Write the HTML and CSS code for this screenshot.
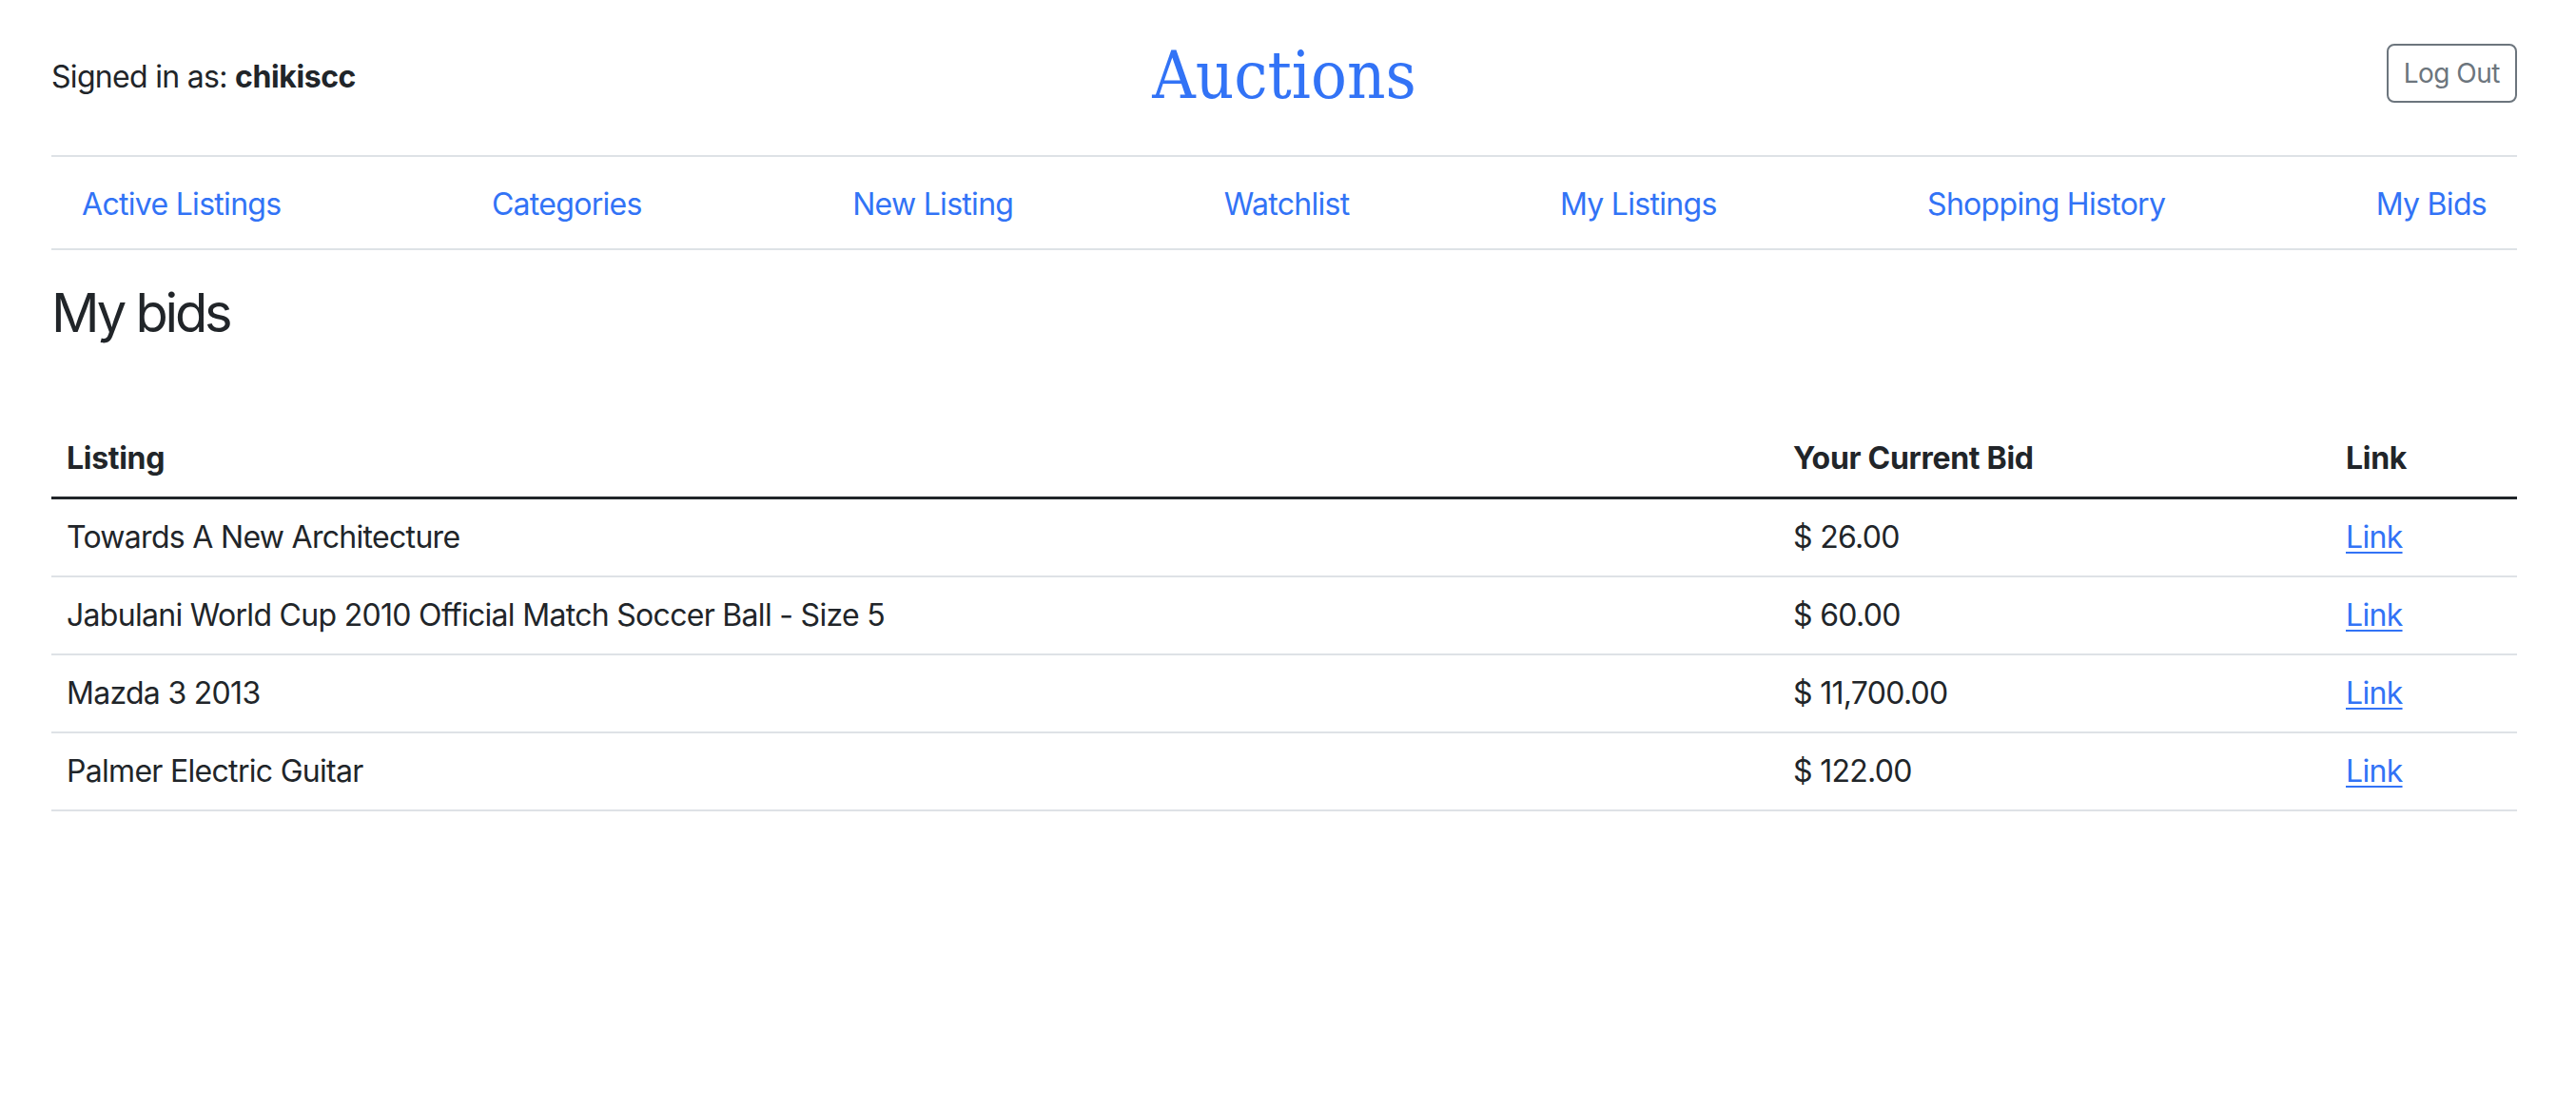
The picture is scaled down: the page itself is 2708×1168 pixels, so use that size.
FILE: index.html
```html
<!DOCTYPE html>
<html lang="en">
<head>
<meta charset="utf-8">
<title>Auctions</title>
<link rel="stylesheet" href="styles.css">
</head>
<body>
<header class="top">
  <div class="signed">Signed in as: <strong>chikiscc</strong></div>
  <h1 class="brand">Auctions</h1>
  <div class="actions"><a class="btn-logout" href="#">Log Out</a></div>
</header>
<nav class="nav">
  <a class="nav-link" href="#">Active Listings</a>
  <a class="nav-link" href="#">Categories</a>
  <a class="nav-link" href="#">New Listing</a>
  <a class="nav-link" href="#">Watchlist</a>
  <a class="nav-link" href="#">My Listings</a>
  <a class="nav-link" href="#">Shopping History</a>
  <a class="nav-link" href="#">My Bids</a>
</nav>
<main>
  <h3 class="page-title">My bids</h3>
  <table class="bids">
    <thead>
      <tr><th>Listing</th><th class="col-bid">Your Current Bid</th><th class="col-link">Link</th></tr>
    </thead>
    <tbody>
      <tr><td>Towards A New Architecture</td><td>$ 26.00</td><td><a href="#">Link</a></td></tr>
      <tr><td>Jabulani World Cup 2010 Official Match Soccer Ball - Size 5</td><td>$ 60.00</td><td><a href="#">Link</a></td></tr>
      <tr><td>Mazda 3 2013</td><td>$ 11,700.00</td><td><a href="#">Link</a></td></tr>
      <tr><td>Palmer Electric Guitar</td><td>$ 122.00</td><td><a href="#">Link</a></td></tr>
    </tbody>
  </table>
</main>
</body>
</html>
```
FILE: styles.css
```css
html, body {
  background: #ffffff;
}
body {
  margin: 0;
  padding: 0 62px 0 54px;
  font-family: Inter, "Noto Sans", "Liberation Sans", sans-serif;
  font-size: 32px;
  line-height: 1.5;
  letter-spacing: -0.7px;
  color: #212529;
}
a {
  color: #3273f6;
  text-decoration: none;
}
.top {
  display: grid;
  grid-template-columns: 1fr auto 1fr;
  align-items: start;
  padding-top: 37px;
  margin-bottom: 42px;
}
.signed {
  margin-top: 20px;
}
.signed strong {
  font-weight: 700;
  letter-spacing: -0.4px;
}
.brand {
  margin: 0;
  font-family: "DejaVu Serif Condensed", "DejaVu Serif", serif;
  font-stretch: condensed;
  font-weight: 400;
  font-size: 70px;
  line-height: 1.2;
  letter-spacing: 0;
  color: #3273f6;
}
.actions {
  display: flex;
  justify-content: flex-end;
  margin-top: 9px;
}
.btn-logout {
  display: inline-block;
  font-size: 28px;
  line-height: 1.5;
  letter-spacing: -0.5px;
  padding: 8px 16px;
  border: 2px solid #6c757d;
  border-radius: 8px;
  color: #6c757d;
}
.nav {
  display: flex;
  justify-content: space-between;
  border-top: 2px solid #dee2e6;
  border-bottom: 2px solid #dee2e6;
  padding: 10px 0 6px;
}
.nav-link {
  display: block;
  padding: 16px 32px;
}
.page-title {
  margin: 33px 0 79px;
  font-size: 56px;
  font-weight: 400;
  line-height: 1.2;
  letter-spacing: -3.2px;
}
.bids {
  width: 100%;
  border-collapse: collapse;
}
.bids th,
.bids td {
  text-align: left;
  padding: 16px;
  vertical-align: top;
  border-bottom: 2px solid #dee2e6;
}
.bids th {
  font-weight: 700;
  letter-spacing: -0.3px;
  border-bottom: 3px solid #212529;
}
.bids .col-bid {
  width: 549px;
}
.bids .col-link {
  width: 164px;
}
.bids td a {
  text-decoration: underline;
  text-underline-offset: 4px;
  text-decoration-thickness: 2px;
}
```
